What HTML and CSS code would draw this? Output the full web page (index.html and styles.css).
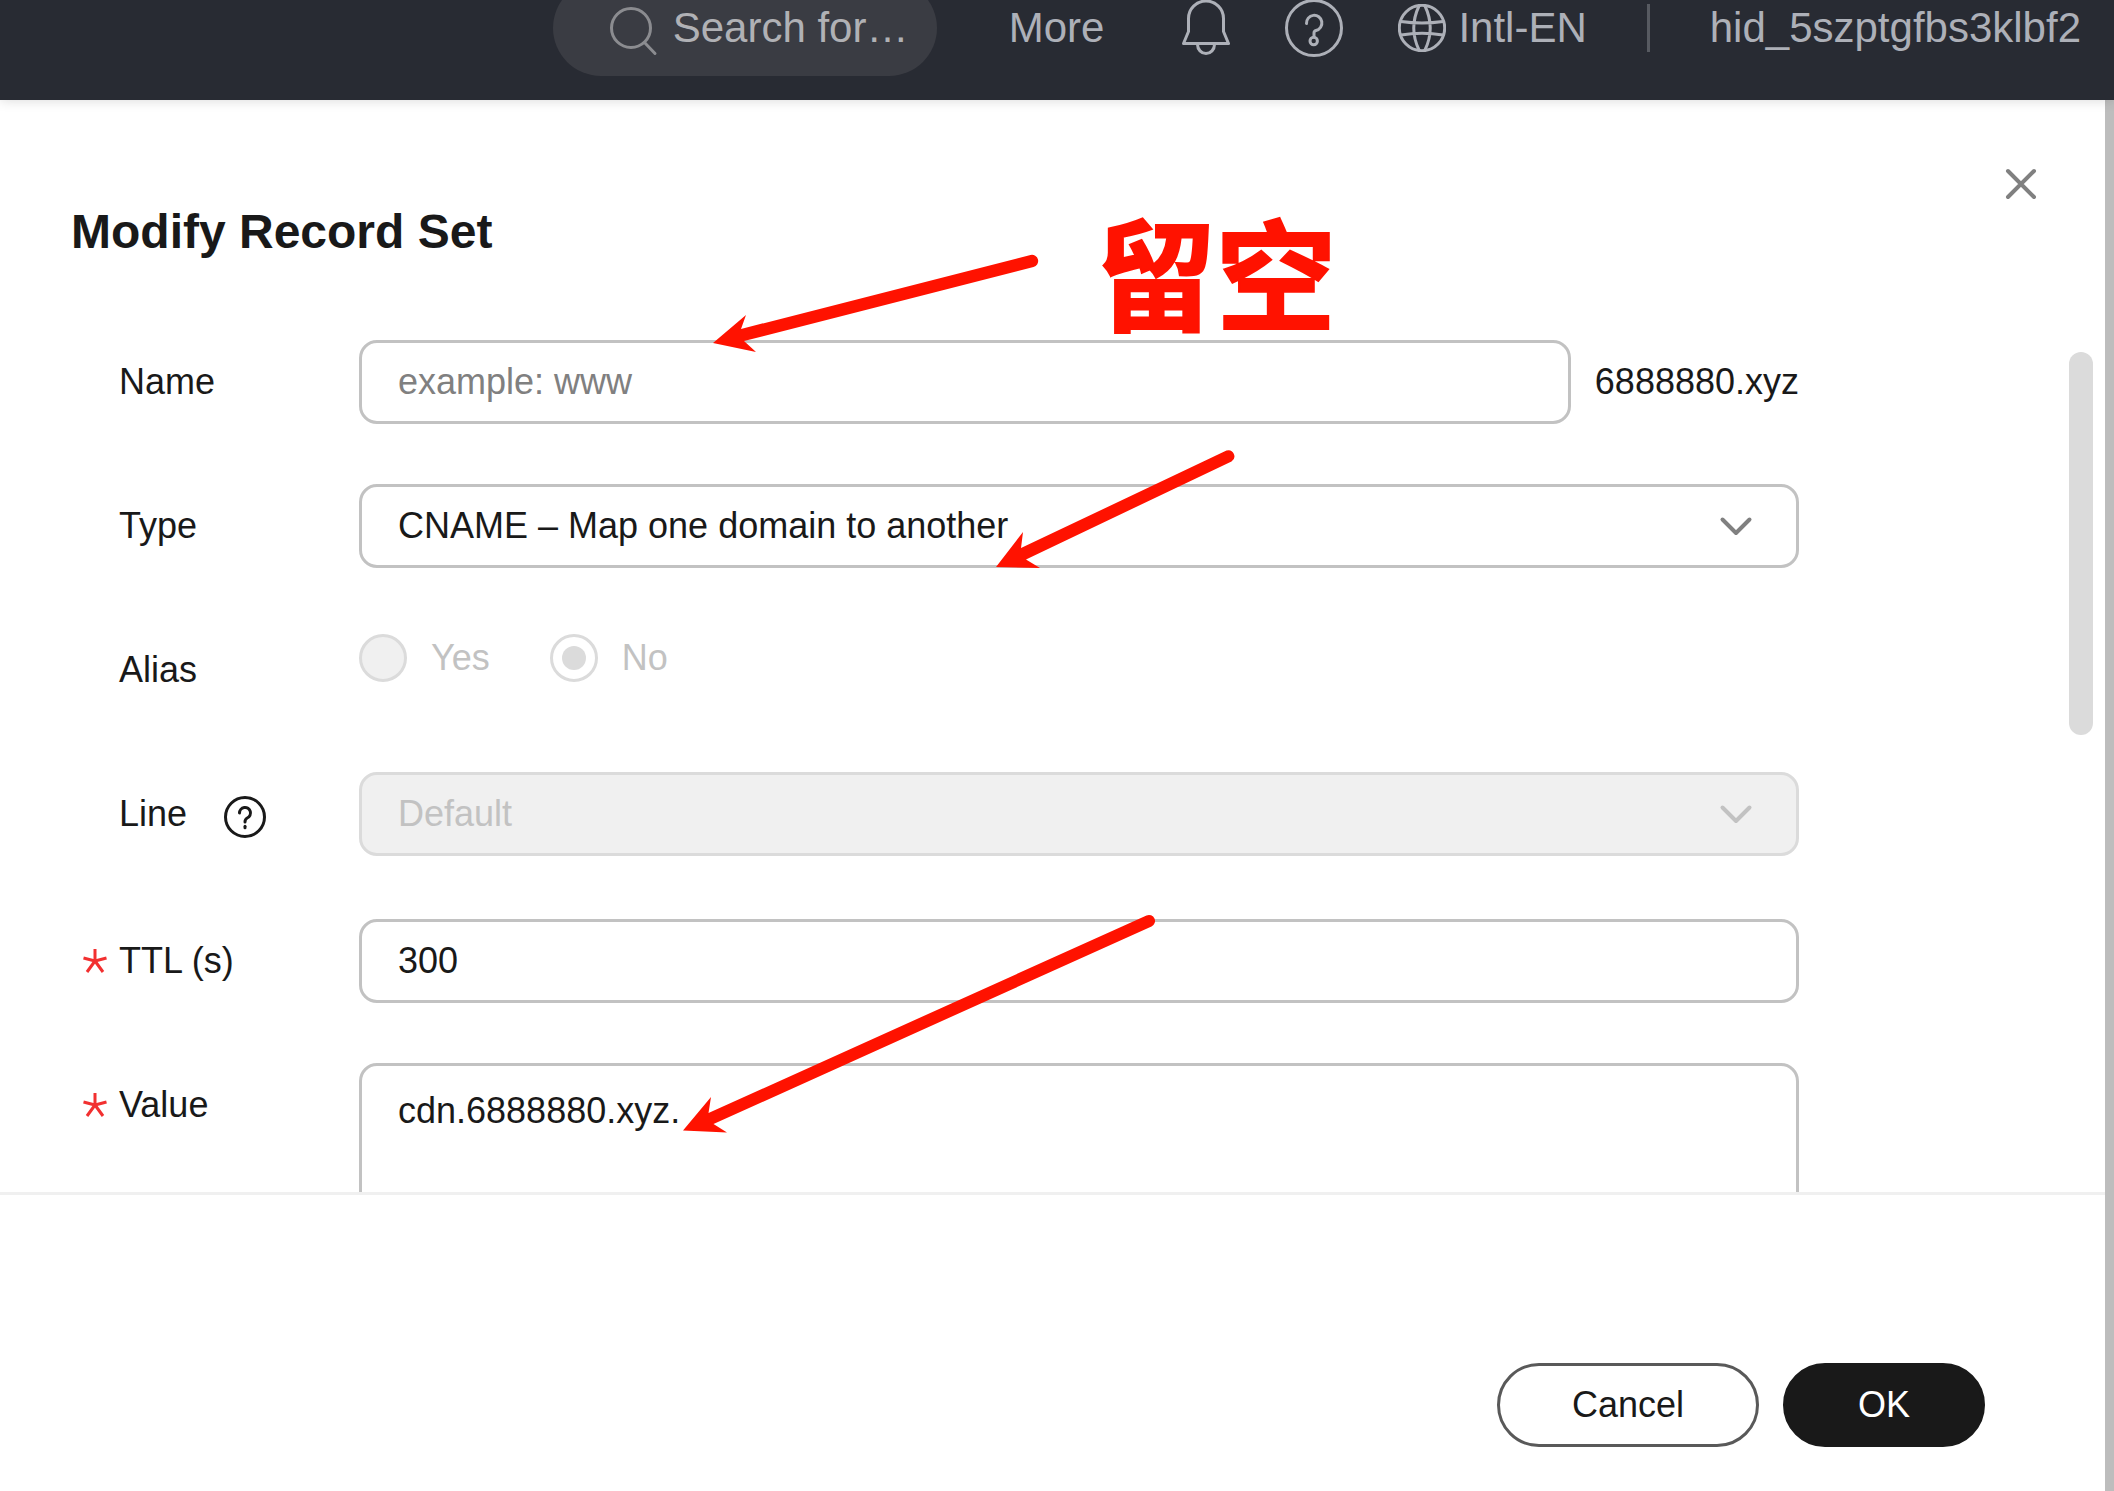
FILE: index.html
```html
<!DOCTYPE html>
<html lang="en">
<head>
<meta charset="utf-8">
<meta name="viewport" content="width=device-width, initial-scale=1">
<title>Modify Record Set</title>
<link rel="stylesheet" href="styles.css">
</head>
<body>
<div class="app">
  <header class="topbar">
    <nav class="topbar-nav">
      <label class="search">
        <svg class="search-icon" viewBox="0 0 48 48" aria-hidden="true"><circle cx="21" cy="24" r="19.500"/><path d="M34.500 38.500 45 49.500"/></svg>
        <input class="search-input" type="text" placeholder="Search for…" aria-label="Search">
      </label>
      <a class="nav-link" href="#more">More</a>
      <button class="icon-button" type="button" aria-label="Notifications">
        <svg class="nav-icon" viewBox="0 0 60 60" aria-hidden="true"><path d="M12.500 33.500V20.500a17.500 17.500 0 0 1 35 0v13l5 12H7.500z"/><path d="M21.500 46.500a8.500 9 0 0 0 17 0"/></svg>
      </button>
      <button class="icon-button" type="button" aria-label="Help">
        <svg class="nav-icon" viewBox="0 0 60 60" aria-hidden="true"><circle cx="30" cy="30" r="27.500"/><path d="M22.500 25.500a7.700 7.700 0 1 1 9.500 7q-2 .5-2 2.500v4"/><circle cx="29.700" cy="43" r="3.700"/></svg>
      </button>
      <a class="nav-link locale" href="#locale">
        <svg class="globe-icon" viewBox="0 0 48 48" aria-hidden="true"><circle cx="24" cy="24" r="22.700"/><path d="M21 2Q10.500 24 21 46M27 2Q37.500 24 27 46M3 17.500Q24 20.500 45 17.500M3 31Q24 27.500 45 31"/></svg>
        Intl-EN
      </a>
      <span class="nav-divider"></span>
      <a class="nav-link" href="#account">hid_5szptgfbs3klbf2</a>
    </nav>
  </header>

  <main class="drawer">
    <div class="drawer-head">
      <h1 class="drawer-title">Modify Record Set</h1>
      <button class="close-button" type="button" aria-label="Close">
        <svg class="close-icon" viewBox="0 0 48 48" aria-hidden="true"><path d="M11 11 37 37M37 11 11 37"/></svg>
      </button>
    </div>

    <div class="drawer-body">
      <form class="form" id="record-form">
        <div class="row">
          <label class="label" for="name">Name</label>
          <div class="name-field">
            <input class="control" id="name" type="text" placeholder="example: www">
            <span>6888880.xyz</span>
          </div>
        </div>
        <div class="row">
          <label class="label" for="type">Type</label>
          <div class="select">
            <select class="control" id="type"><option>CNAME – Map one domain to another</option></select>
            <svg class="chevron" viewBox="0 0 36 24" aria-hidden="true"><path d="M4.500 5.500 18 19 31.500 5.500"/></svg>
          </div>
        </div>
        <div class="row">
          <span class="label" id="alias-label">Alias</span>
          <div class="radios" role="radiogroup" aria-labelledby="alias-label">
            <label class="radio"><input class="radio-input" type="radio" name="alias" disabled>Yes</label>
            <label class="radio"><input class="radio-input" type="radio" name="alias" checked disabled>No</label>
          </div>
        </div>
        <div class="row row-tall">
          <div class="label">
            <label for="line">Line</label>
            <svg class="hint-icon" viewBox="0 0 42 42" role="img" aria-label="About lines"><circle cx="21" cy="21" r="19.500"/><path d="M15.500 17a5.500 5.500 0 1 1 7.700 5q-2.200 1.200-2.200 4"/><path d="M21 30.200v1.600"/></svg>
          </div>
          <div class="select">
            <select class="control" id="line" disabled><option>Default</option></select>
            <svg class="chevron chevron-disabled" viewBox="0 0 36 24" aria-hidden="true"><path d="M4.500 5.500 18 19 31.500 5.500"/></svg>
          </div>
        </div>
        <div class="row">
          <label class="label label-required" for="ttl">
            <svg class="required-icon" viewBox="0 0 24 24" aria-hidden="true"><path d="M12 12V0M12 12 .5 9M12 12 23.500 9M12 12 4 23M12 12 20 23"/></svg>
            TTL (s)
          </label>
          <input class="control" id="ttl" type="text" value="300" required>
        </div>
        <div class="row">
          <label class="label label-required" for="value">
            <svg class="required-icon" viewBox="0 0 24 24" aria-hidden="true"><path d="M12 12V0M12 12 .5 9M12 12 23.500 9M12 12 4 23M12 12 20 23"/></svg>
            Value
          </label>
          <textarea class="control control-multiline" id="value" required>cdn.6888880.xyz.</textarea>
        </div>
      </form>
      <div class="scroll-thumb"></div>
    </div>

    <footer class="drawer-foot">
      <button class="button" type="button">Cancel</button>
      <button class="button button-primary" type="submit" form="record-form">OK</button>
    </footer>
  </main>

  <svg class="notes" aria-hidden="true">
    <path d="M713 343 746 315 741 329 1030.500 255A6 6 0 0 1 1033.500 267L744 341 756 352Z"/>
    <path d="M996 567 1023 532 1021 548 1226.500 450.600A6 6 0 0 1 1231.500 461.400L1026 559.500 1040 568Z"/>
    <path d="M683 1130.500 711 1097 708.500 1113 1146.500 915.500A6 6 0 0 1 1151.500 926.500L713.500 1124 727 1132.500Z"/>
    <text class="notes-text" x="1096" y="322">留空</text>
  </svg>
</div>
</body>
</html>
```

FILE: styles.css
```css
*,
*::before,
*::after {
  box-sizing: border-box;
}

body {
  margin: 0;
  background: #bdbdbd;
  color: #191919;
  font: 36px/54px "Liberation Sans", Arial, "Noto Sans CJK SC", sans-serif;
}

button,
input,
select,
textarea {
  margin: 0;
  color: inherit;
  font: inherit;
}

svg {
  display: block;
  flex: none;
  fill: none;
  stroke: currentColor;
  stroke-width: 3px;
  stroke-linecap: round;
  stroke-linejoin: round;
}

.app {
  position: relative;
  display: flex;
  flex-direction: column;
  height: 100vh;
  overflow: hidden;
}

/* Top bar */
.topbar {
  position: relative;
  z-index: 1;
  flex: none;
  padding: 0 33px 24px;
  background: #282b33;
  box-shadow: 0 0 12px rgba(0, 0, 0, 0.16);
  color: #adb0b8;
  font-size: 42px;
}

.topbar-nav {
  display: flex;
  align-items: center;
  justify-content: flex-end;
  height: 96px;
  margin-top: -20px;
}

.search {
  display: flex;
  align-items: center;
  gap: 15px;
  width: 384px;
  height: 96px;
  margin-right: 72px;
  padding: 0 24px 0 57px;
  border-radius: 48px;
  background: #3a3c43;
}

.search-icon {
  width: 48px;
  height: 48px;
  overflow: visible;
  color: #8b8c90;
}

.search-input {
  flex: 1;
  min-width: 0;
  padding: 0;
  border: 0;
  outline: 0;
  background: transparent;
}

.search-input::placeholder {
  color: #b0b1b5;
  opacity: 1;
}

.nav-link {
  color: inherit;
  text-decoration: none;
}

.icon-button,
.close-button {
  padding: 0;
  border: 0;
  background: none;
}

.icon-button {
  margin-left: 48px;
}

.nav-link + .icon-button {
  margin-left: 72px;
}

.nav-icon {
  width: 60px;
  height: 60px;
}

.locale {
  display: flex;
  align-items: center;
  gap: 12px;
  margin-left: 54px;
}

.globe-icon {
  width: 48px;
  height: 48px;
}

.nav-divider {
  width: 3px;
  height: 48px;
  margin: 0 60px;
  background: #575a61;
}

/* Drawer */
.drawer {
  display: flex;
  flex: 1;
  flex-direction: column;
  min-height: 0;
  margin-right: 9px;
  background: #fff;
}

.drawer-head {
  display: flex;
  align-items: flex-start;
  justify-content: space-between;
  padding: 60px 60px 78px 71px;
}

.drawer-title {
  margin: 42px 0 0;
  font-size: 48px;
  line-height: 60px;
}

.close-button,
.close-icon {
  width: 48px;
  height: 48px;
}

.close-icon {
  color: #808080;
  stroke-width: 4px;
}

.drawer-body {
  position: relative;
  flex: 1;
  min-height: 0;
  overflow: hidden;
}

.scroll-thumb {
  position: absolute;
  top: 12px;
  right: 12px;
  width: 24px;
  height: 383px;
  border-radius: 12px;
  background: #dbdbdb;
}

/* Form */
.form {
  display: grid;
  gap: 60px;
  padding: 0 306px 0 83px;
}

.row {
  display: grid;
  grid-template-columns: 276px 1fr;
  align-items: start;
}

.row-tall {
  padding-bottom: 3px;
}

.label {
  display: flex;
  align-items: center;
  height: 84px;
  padding-left: 36px;
}

.label-required {
  gap: 12px;
  padding-left: 0;
}

.required-icon {
  width: 24px;
  height: 24px;
  overflow: visible;
  color: #f23030;
  stroke-linecap: butt;
}

.hint-icon {
  width: 42px;
  height: 42px;
  margin: 6px 0 0 37px;
}

.control {
  display: block;
  width: 100%;
  height: 84px;
  padding: 0 36px;
  border: 3px solid #c2c2c2;
  border-radius: 18px;
  outline: 0;
  background: #fff;
  appearance: none;
}

.control::placeholder {
  color: #808080;
  opacity: 1;
}

.control:disabled {
  border-color: #dbdbdb;
  background: #f0f0f0;
  color: #c2c2c2;
  opacity: 1;
}

.control-multiline {
  height: 240px;
  padding: 18px 36px;
  resize: none;
}

.name-field {
  display: flex;
  align-items: center;
  gap: 24px;
}

.name-field .control {
  flex: 1;
  min-width: 0;
}

.select {
  display: grid;
  align-items: center;
}

.select > * {
  grid-area: 1 / 1;
}

.chevron {
  justify-self: end;
  width: 36px;
  height: 24px;
  margin-right: 45px;
  color: #808080;
  stroke-width: 4px;
  pointer-events: none;
}

.chevron-disabled {
  color: #c2c2c2;
}

.radios {
  display: flex;
  gap: 60px;
  padding-top: 6px;
}

.radio {
  display: flex;
  align-items: center;
  gap: 24px;
  height: 48px;
  color: #c2c2c2;
}

.radio-input {
  display: grid;
  place-items: center;
  width: 48px;
  height: 48px;
  border: 3px solid #dbdbdb;
  border-radius: 50%;
  background: #f0f0f0;
  appearance: none;
}

.radio-input:checked {
  background: #fff;
}

.radio-input:checked::before {
  width: 24px;
  height: 24px;
  border-radius: 50%;
  background: #dbdbdb;
  content: "";
}

/* Footer */
.drawer-foot {
  display: flex;
  justify-content: flex-end;
  gap: 24px;
  padding: 168px 120px 44px;
  border-top: 3px solid #f0f0f0;
}

.button {
  height: 84px;
  padding: 0 72px;
  border: 3px solid #595959;
  border-radius: 42px;
  background: #fff;
}

.button-primary {
  border-color: #191919;
  background: #191919;
  color: #fff;
}

/* Hand-drawn notes over the form */
.notes {
  position: absolute;
  inset: 0;
  z-index: 2;
  width: 100%;
  height: 100%;
  fill: #ff1200;
  stroke: none;
  pointer-events: none;
}

.notes-text {
  stroke: #ff1200;
  stroke-width: 2px;
  stroke-linejoin: miter;
  font-family: "Noto Sans CJK SC", sans-serif;
  font-size: 120px;
  font-weight: 700;
}
```
